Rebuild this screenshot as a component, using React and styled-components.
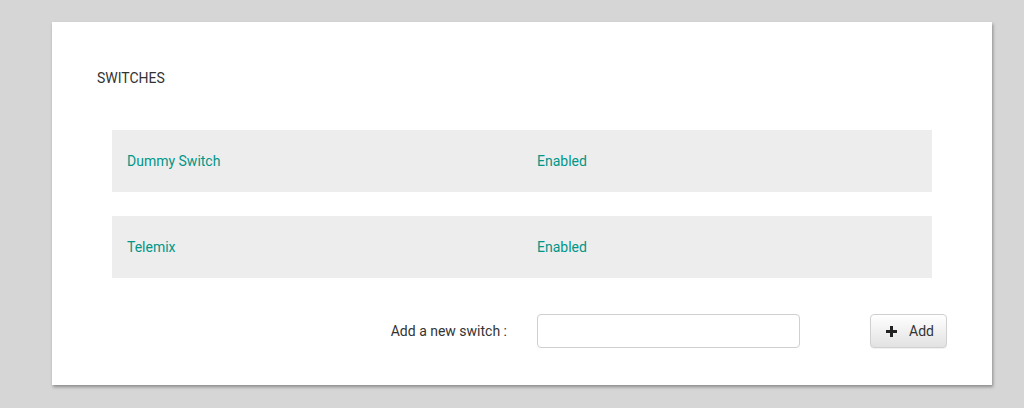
import React from "react";
import styled, { createGlobalStyle } from "styled-components";

const Global = createGlobalStyle`
  html, body { margin: 0; padding: 0; }
  body {
    background: #d6d6d6;
    font-family: Roboto, "Noto Sans", sans-serif;
    font-size: 14px;
    color: #333;
  }
`;

const Page = styled.div`
  padding: 22px 0 0 52px;
  height: 408px;
  box-sizing: border-box;
`;

const Card = styled.section`
  width: 940px;
  box-sizing: border-box;
  background: #fff;
  padding: 46px 45px 37px 45px;
  box-shadow: 1px 2px 3px rgba(0, 0, 0, 0.35);
`;

const Title = styled.h2`
  margin: 0;
  font-size: 14px;
  font-weight: 400;
  line-height: 20px;
  color: #333;
  text-transform: uppercase;
`;

const List = styled.div`
  margin: 42px 0 0 15px;
  width: 820px;
  display: flex;
  flex-direction: column;
  gap: 24px;
`;

const Row = styled.div`
  display: grid;
  grid-template-columns: 1fr 1fr;
  height: 62px;
  align-items: center;
  background: #ededed;
`;

const Cell = styled.span`
  padding-left: 15px;
  color: #009688;
  font-size: 14px;
  line-height: 20px;
`;

const Form = styled.form`
  margin-top: 36px;
  width: 850px;
  display: grid;
  grid-template-columns: 425px 1fr auto;
  align-items: center;
`;

const Label = styled.label`
  text-align: right;
  padding-right: 15px;
  color: #333;
  font-size: 14px;
`;

const InputWrap = styled.div`
  padding-left: 15px;
`;

const Input = styled.input`
  display: block;
  width: 263px;
  height: 34px;
  box-sizing: border-box;
  border: 1px solid #cfcfcf;
  border-radius: 4px;
  padding: 6px 12px;
  font-family: inherit;
  font-size: 14px;
`;

const Button = styled.button`
  display: flex;
  align-items: center;
  gap: 12px;
  width: 77px;
  height: 34px;
  box-sizing: border-box;
  padding: 0 0 0 15px;
  border: 1px solid #d0d0d0;
  border-radius: 4px;
  background: linear-gradient(to bottom, #ffffff 0%, #e2e2e2 100%);
  box-shadow: 0 1px 1px rgba(0, 0, 0, 0.06);
  font-family: inherit;
  font-size: 14px;
  color: #333;
  cursor: pointer;
`;

const Plus = () => (
  <svg width="11" height="11" viewBox="0 0 11 11">
    <path d="M4 0h3v4h4v3H7v4H4V7H0V4h4z" fill="#222" />
  </svg>
);

const switches = [
  { name: "Dummy Switch", state: "Enabled" },
  { name: "Telemix", state: "Enabled" },
];

export default function App() {
  return (
    <>
      <Global />
      <Page>
        <Card>
          <Title>Switches</Title>
          <List>
            {switches.map((s) => (
              <Row key={s.name}>
                <Cell>{s.name}</Cell>
                <Cell>{s.state}</Cell>
              </Row>
            ))}
          </List>
          <Form onSubmit={(e) => e.preventDefault()}>
            <Label htmlFor="sw">Add a new switch :</Label>
            <InputWrap>
              <Input id="sw" type="text" />
            </InputWrap>
            <Button type="submit">
              <Plus />
              Add
            </Button>
          </Form>
        </Card>
      </Page>
    </>
  );
}
